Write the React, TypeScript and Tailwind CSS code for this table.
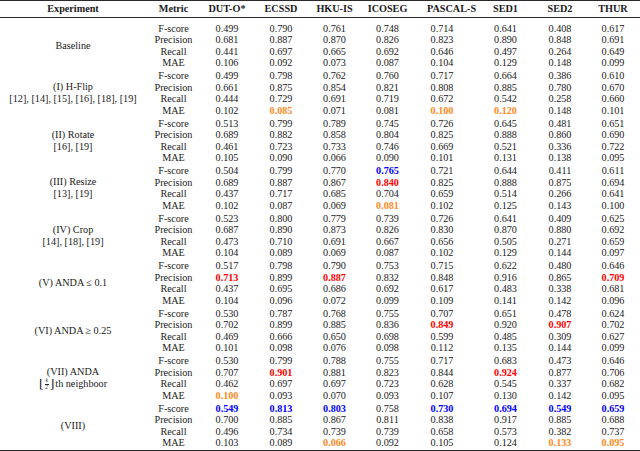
import React from "react";

type Cell = string | { v: string; c: "r" | "b" | "o" };

interface Group {
  label: React.ReactNode;
  rows: Cell[][];
}

const METRICS = ["F-score", "Precision", "Recall", "MAE"];
const DATASETS = ["DUT-O*", "ECSSD", "HKU-IS", "ICOSEG", "PASCAL-S", "SED1", "SED2", "THUR"];

const r = (v: string): Cell => ({ v, c: "r" });
const b = (v: string): Cell => ({ v, c: "b" });
const o = (v: string): Cell => ({ v, c: "o" });

const COLOR: Record<string, string> = {
  r: "text-[#ff0000] font-bold",
  b: "text-[#0000ff] font-bold",
  o: "text-[#ff8a1c] font-bold",
};

const floorFrac = (
  <span className="inline-flex items-center">
    <span className="text-[12px] leading-none">⌊</span>
    <span className="inline-flex flex-col items-center leading-none text-[5.5px] italic mx-[1px]">
      <span>k</span>
      <span className="border-t border-[#222] w-[4px]" />
      <span>2</span>
    </span>
    <span className="text-[12px] leading-none">⌋</span>
  </span>
);

const GROUPS: Group[] = [
  {
    label: "Baseline",
    rows: [
      ["0.499", "0.790", "0.761", "0.748", "0.714", "0.641", "0.408", "0.617"],
      ["0.681", "0.887", "0.870", "0.826", "0.823", "0.890", "0.848", "0.691"],
      ["0.441", "0.697", "0.665", "0.692", "0.646", "0.497", "0.264", "0.649"],
      ["0.106", "0.092", "0.073", "0.087", "0.104", "0.129", "0.148", "0.099"],
    ],
  },
  {
    label: (
      <>
        <div>(I) H-Flip</div>
        <div>[12], [14], [15], [16], [18], [19]</div>
      </>
    ),
    rows: [
      ["0.499", "0.798", "0.762", "0.760", "0.717", "0.664", "0.386", "0.610"],
      ["0.661", "0.875", "0.854", "0.821", "0.808", "0.885", "0.780", "0.670"],
      ["0.444", "0.729", "0.691", "0.719", "0.672", "0.542", "0.258", "0.660"],
      ["0.102", o("0.085"), "0.071", "0.081", o("0.100"), o("0.120"), "0.148", "0.101"],
    ],
  },
  {
    label: (
      <>
        <div>(II) Rotate</div>
        <div>[16], [19]</div>
      </>
    ),
    rows: [
      ["0.513", "0.799", "0.789", "0.745", "0.726", "0.645", "0.481", "0.651"],
      ["0.689", "0.882", "0.858", "0.804", "0.825", "0.888", "0.860", "0.690"],
      ["0.461", "0.723", "0.733", "0.746", "0.669", "0.521", "0.336", "0.722"],
      ["0.105", "0.090", "0.066", "0.090", "0.101", "0.131", "0.138", "0.095"],
    ],
  },
  {
    label: (
      <>
        <div>(III) Resize</div>
        <div>[13], [19]</div>
      </>
    ),
    rows: [
      ["0.504", "0.799", "0.770", b("0.765"), "0.721", "0.644", "0.411", "0.611"],
      ["0.689", "0.887", "0.867", r("0.840"), "0.825", "0.888", "0.875", "0.694"],
      ["0.437", "0.717", "0.685", "0.704", "0.659", "0.514", "0.266", "0.641"],
      ["0.102", "0.087", "0.069", o("0.081"), "0.102", "0.125", "0.143", "0.100"],
    ],
  },
  {
    label: (
      <>
        <div>(IV) Crop</div>
        <div>[14], [18], [19]</div>
      </>
    ),
    rows: [
      ["0.523", "0.800", "0.779", "0.739", "0.726", "0.641", "0.409", "0.625"],
      ["0.687", "0.890", "0.873", "0.826", "0.830", "0.870", "0.880", "0.692"],
      ["0.473", "0.710", "0.691", "0.667", "0.656", "0.505", "0.271", "0.659"],
      ["0.104", "0.089", "0.069", "0.087", "0.102", "0.129", "0.144", "0.097"],
    ],
  },
  {
    label: <div>(V) ANDA ≤ 0.1</div>,
    rows: [
      ["0.517", "0.798", "0.790", "0.753", "0.715", "0.622", "0.480", "0.646"],
      [r("0.713"), "0.899", r("0.887"), "0.832", "0.848", "0.916", "0.865", r("0.709")],
      ["0.437", "0.695", "0.686", "0.692", "0.617", "0.483", "0.338", "0.681"],
      ["0.104", "0.096", "0.072", "0.099", "0.109", "0.141", "0.142", "0.096"],
    ],
  },
  {
    label: <div>(VI) ANDA ≥ 0.25</div>,
    rows: [
      ["0.530", "0.787", "0.768", "0.755", "0.707", "0.651", "0.478", "0.624"],
      ["0.702", "0.899", "0.885", "0.836", r("0.849"), "0.920", r("0.907"), "0.702"],
      ["0.469", "0.666", "0.650", "0.698", "0.599", "0.485", "0.309", "0.627"],
      ["0.101", "0.098", "0.076", "0.098", "0.112", "0.135", "0.144", "0.099"],
    ],
  },
  {
    label: (
      <>
        <div>(VII) ANDA</div>
        <div className="flex items-center justify-center gap-[1px]">
          {floorFrac}
          <span>th neighboor</span>
        </div>
      </>
    ),
    rows: [
      ["0.530", "0.799", "0.788", "0.755", "0.717", "0.683", "0.473", "0.646"],
      ["0.707", r("0.901"), "0.881", "0.823", "0.844", r("0.924"), "0.877", "0.706"],
      ["0.462", "0.697", "0.697", "0.723", "0.628", "0.545", "0.337", "0.682"],
      [o("0.100"), "0.093", "0.070", "0.093", "0.107", "0.130", "0.142", "0.095"],
    ],
  },
  {
    label: "(VIII)",
    rows: [
      [b("0.549"), b("0.813"), b("0.803"), "0.758", b("0.730"), b("0.694"), b("0.549"), b("0.659")],
      ["0.700", "0.885", "0.867", "0.811", "0.838", "0.917", "0.885", "0.688"],
      ["0.496", "0.734", "0.739", "0.739", "0.658", "0.573", "0.382", "0.737"],
      ["0.103", "0.089", o("0.066"), "0.092", "0.105", "0.124", o("0.133"), o("0.095")],
    ],
  },
];

// column widths tuned so each column centre sits where the reference has it
const COLS = "grid grid-cols-[146px_55px_52px_56px_51px_55px_54px_73px_36px_62px]";

export default function App() {
  return (
    <div
      className="w-[640px] h-[451px] bg-white text-[#1a1a1a] text-[10.2px] overflow-hidden"
      style={{ fontFamily: '"Liberation Serif", "DejaVu Serif", serif' }}
    >
      <div className="border-t-[1.6px] border-b border-[#2a2a2a]">
        <div className={`${COLS} h-[16px] items-center font-bold text-center whitespace-nowrap leading-none`}>
          <div>Experiment</div>
          <div>Metric</div>
          {DATASETS.map((d, i) => (
            <div
              key={d}
              className={i === 4 ? "pl-[12px]" : i === 7 ? "pl-[8px]" : ""}
            >
              {d}
            </div>
          ))}
        </div>
      </div>

      <div className="border-b-[1.6px] border-[#2a2a2a] pt-[4px]">
        {GROUPS.map((g, gi) => (
          <div key={gi} className={`${COLS} py-[0.75px] leading-[11.5px] whitespace-nowrap`}>
            <div className="row-span-4 flex flex-col items-center justify-center text-center leading-[12px]">
              {g.label}
            </div>
            {g.rows.map((row, ri) => (
              <React.Fragment key={ri}>
                <div className="text-center h-[11.5px]">{METRICS[ri]}</div>
                {row.map((cell, ci) => {
                  const isObj = typeof cell !== "string";
                  return (
                    <div
                      key={ci}
                      className={`text-center h-[11.5px] ${ci === 7 ? "pl-[8px]" : ""} ${isObj ? COLOR[cell.c] : ""}`}
                    >
                      {isObj ? cell.v : cell}
                    </div>
                  );
                })}
              </React.Fragment>
            ))}
          </div>
        ))}
      </div>
    </div>
  );
}
